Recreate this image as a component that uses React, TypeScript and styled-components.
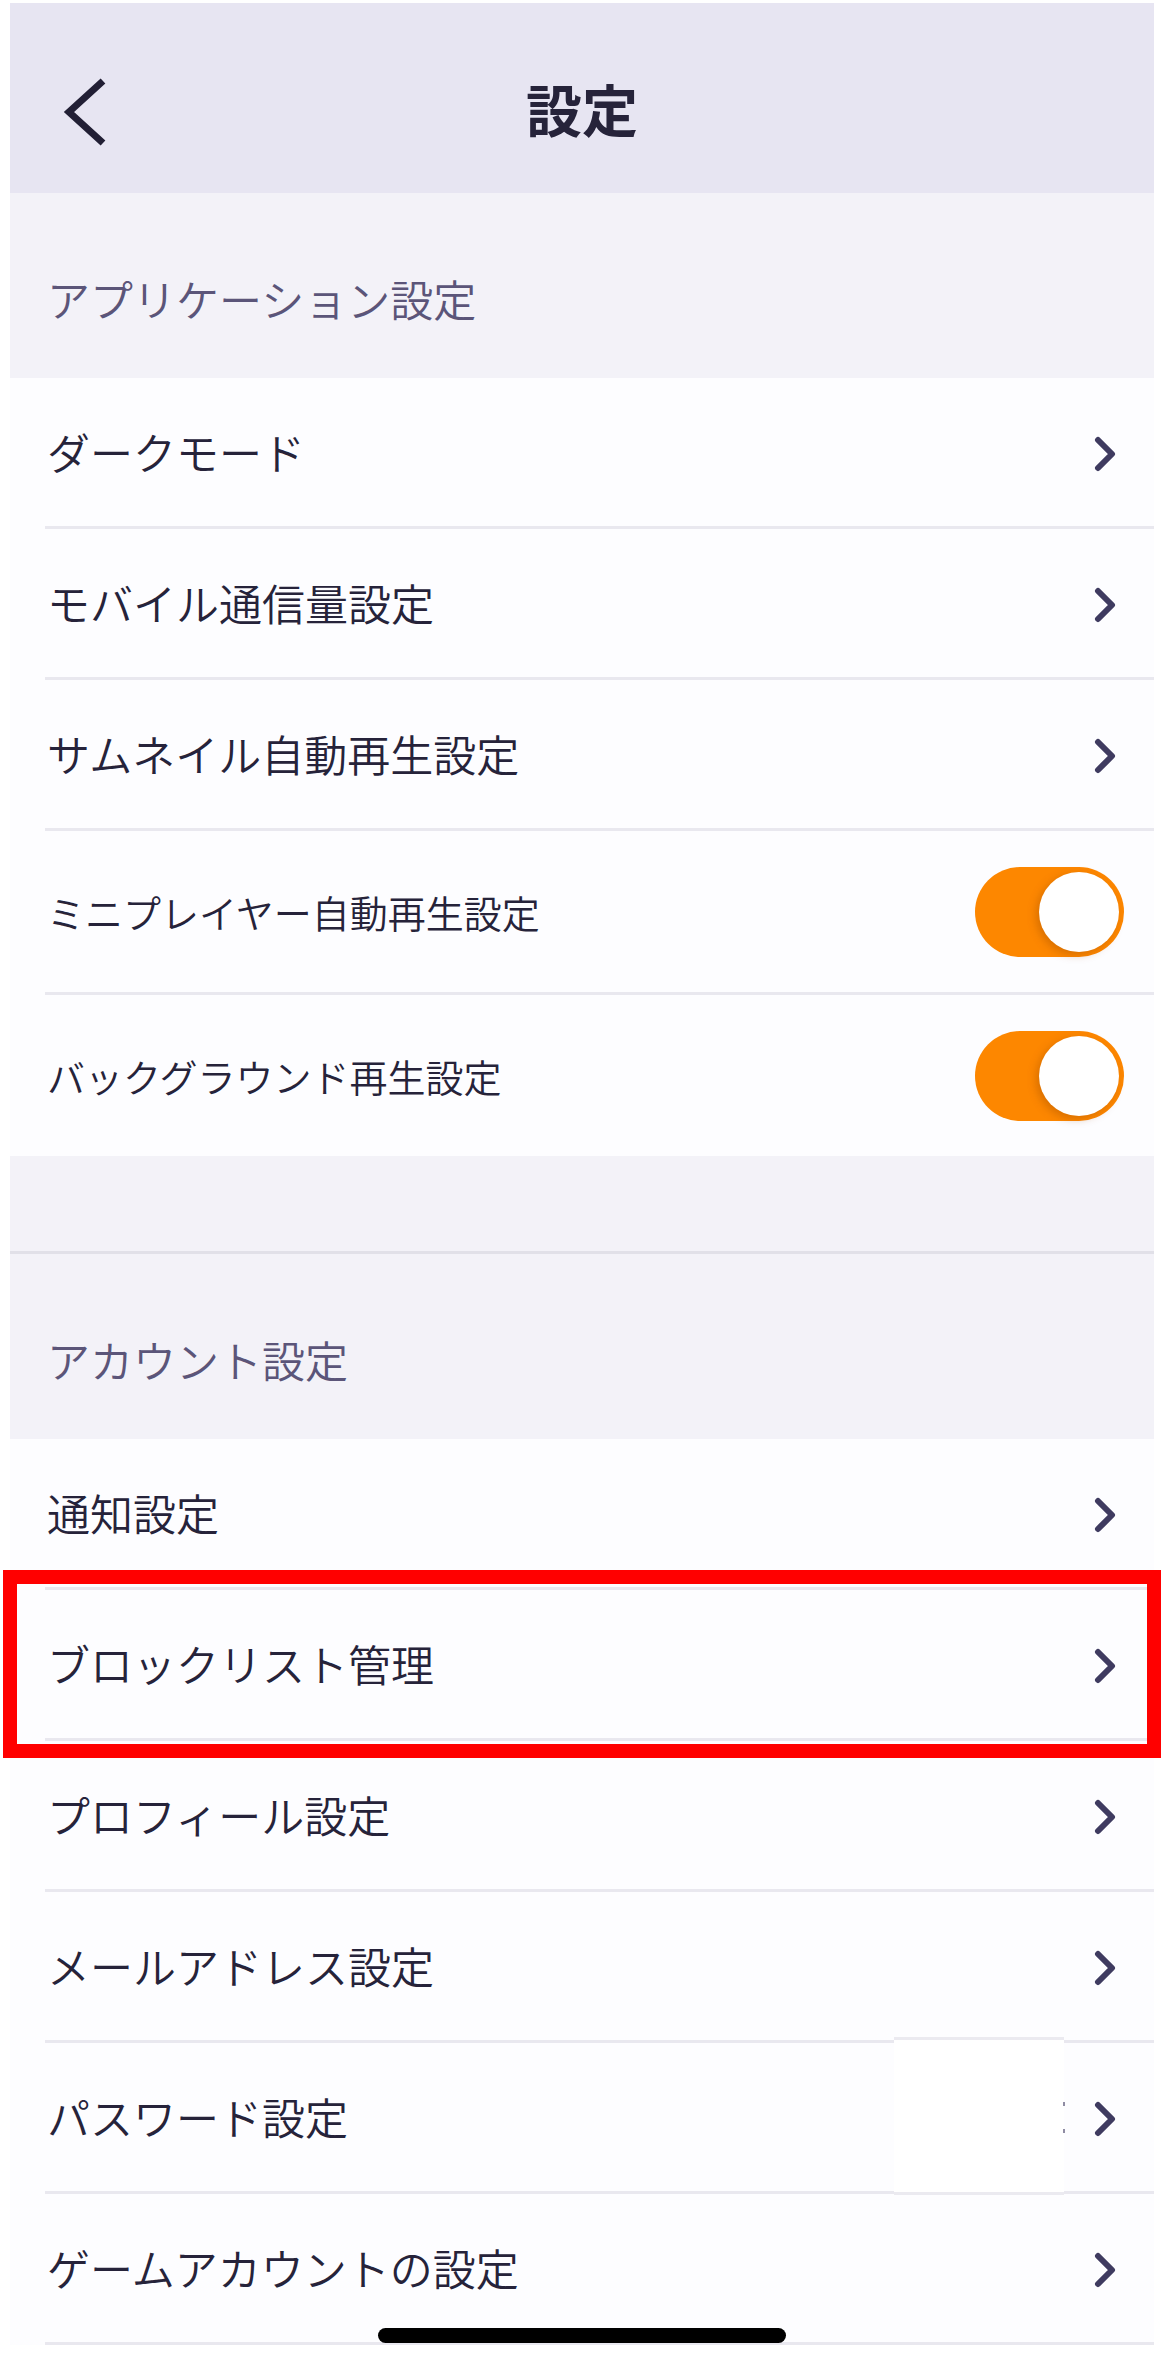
import React from 'react'
import styled, { createGlobalStyle } from 'styled-components'

const GlobalStyle = createGlobalStyle`
  html, body {
    margin: 0;
    padding: 0;
    background: #ffffff;
  }
  body {
    font-family: "Noto Sans CJK JP", "Noto Sans", sans-serif;
    color: #26233a;
  }
`

type Item = {
  label: string
  kind: 'link' | 'toggle'
  highlight?: boolean
  glitch?: boolean
}

const appSettings: Item[] = [
  { label: 'ダークモード', kind: 'link' },
  { label: 'モバイル通信量設定', kind: 'link' },
  { label: 'サムネイル自動再生設定', kind: 'link' },
  { label: 'ミニプレイヤー自動再生設定', kind: 'toggle' },
  { label: 'バックグラウンド再生設定', kind: 'toggle' },
]

const accountSettings: Item[] = [
  { label: '通知設定', kind: 'link' },
  { label: 'ブロックリスト管理', kind: 'link', highlight: true },
  { label: 'プロフィール設定', kind: 'link' },
  { label: 'メールアドレス設定', kind: 'link' },
  { label: 'パスワード設定', kind: 'link', glitch: true },
  { label: 'ゲームアカウントの設定', kind: 'link' },
]

const BackIcon = () => (
  <svg width="44" height="74" viewBox="0 0 44 74">
    <polyline
      points="40,6 6,37 40,68"
      fill="none"
      stroke="#221f35"
      strokeWidth="7"
    />
  </svg>
)

const Chevron = () => (
  <svg width="22" height="36" viewBox="0 0 22 36">
    <polyline
      points="4,4 18,18 4,32"
      fill="none"
      stroke="#3f3b60"
      strokeWidth="6"
      strokeLinecap="round"
      strokeLinejoin="round"
    />
  </svg>
)

const SettingRow = ({ item, last }: { item: Item; last?: boolean }) => (
  <Row $toggle={item.kind === 'toggle'} $divider={!last}>
    <RowLabel $small={item.kind === 'toggle'}>{item.label}</RowLabel>
    {item.kind === 'toggle' ? (
      <Toggle>
        <Knob />
      </Toggle>
    ) : (
      <ChevronWrap>
        <Chevron />
      </ChevronWrap>
    )}
    {item.highlight && <Highlight />}
    {item.glitch && (
      <Glitch>
        <GlitchDots />
      </Glitch>
    )}
  </Row>
)

export default function App() {
  return (
    <>
      <GlobalStyle />
      <Page>
        <Header>
          <HeaderInner>
            <BackButton>
              <BackIcon />
            </BackButton>
            <Title>設定</Title>
          </HeaderInner>
        </Header>

        <SectionHeader>アプリケーション設定</SectionHeader>
        <List>
          {appSettings.map((item, i) => (
            <SettingRow
              key={item.label}
              item={item}
              last={i === appSettings.length - 1}
            />
          ))}
        </List>

        <Spacer />

        <SectionHeader>アカウント設定</SectionHeader>
        <List>
          {accountSettings.map((item) => (
            <SettingRow key={item.label} item={item} />
          ))}
        </List>

        <HomeBar>
          <HomeIndicator />
        </HomeBar>
      </Page>
    </>
  )
}

const Page = styled.div`
  position: relative;
  width: 1144px;
  min-height: 2366px;
  margin: 0 auto;
  padding-top: 3px;
  display: flex;
  flex-direction: column;
`

const Header = styled.header`
  height: 190px;
  background-color: #e7e5f2;
  padding-top: 24px;
  box-sizing: border-box;
`

const HeaderInner = styled.div`
  position: relative;
  height: 162px;
  display: flex;
  align-items: center;
  justify-content: center;
`

const BackButton = styled.div`
  position: absolute;
  left: 53px;
  top: 48px;
  display: flex;
`

const Title = styled.h1`
  margin: 0;
  font-size: 56px;
  font-weight: 700;
  color: #26233a;
  line-height: 1;
  letter-spacing: 0;
`

const SectionHeader = styled.div`
  height: 185px;
  box-sizing: border-box;
  background-color: #f3f2f8;
  display: flex;
  align-items: flex-end;
  padding: 0 0 53px 37px;
  font-size: 43px;
  font-weight: 350;
  line-height: 1.2;
  color: #5b5579;
`

const List = styled.div`
  display: flex;
  flex-direction: column;
  background-color: #fdfdff;
`

const Row = styled.div<{ $toggle?: boolean; $divider?: boolean }>`
  position: relative;
  height: ${(p) => (p.$toggle ? 161 : 148)}px;
  display: flex;
  align-items: center;
  justify-content: space-between;
  padding: 0 30px 0 37px;
  margin-bottom: ${(p) => (p.$divider ? 3 : 0)}px;

  &::after {
    content: '';
    display: ${(p) => (p.$divider ? 'block' : 'none')};
    position: absolute;
    left: 35px;
    right: 0;
    bottom: -3px;
    height: 3px;
    background-color: #e9e8ef;
  }
`

const RowLabel = styled.span<{ $small?: boolean }>`
  font-size: ${(p) => (p.$small ? 38 : 43)}px;
  font-weight: 350;
  line-height: 1.2;
  color: #26233a;
`

const ChevronWrap = styled.div`
  display: flex;
  margin-right: 8px;
  margin-top: 4px;
`

const Toggle = styled.div`
  width: 149px;
  height: 90px;
  border-radius: 45px;
  background-color: #fd8700;
  display: flex;
  align-items: center;
  justify-content: flex-end;
  padding-right: 5px;
  box-sizing: border-box;
`

const Knob = styled.div`
  width: 80px;
  height: 80px;
  border-radius: 50%;
  background-color: #ffffff;
  box-shadow: -3px 3px 8px rgba(150, 70, 0, 0.35);
`

const Highlight = styled.div`
  position: absolute;
  top: -20px;
  bottom: -20px;
  left: -7px;
  right: -7px;
  border: 14px solid #ff0000;
  pointer-events: none;
  z-index: 2;
`

const Glitch = styled.div`
  position: absolute;
  left: 884px;
  width: 170px;
  top: -6px;
  bottom: -4px;
  background-color: #ffffff;
  border-top: 3px solid #ebeaf0;
  border-bottom: 3px solid #ebeaf0;
  z-index: 1;
`

const GlitchDots = styled.div`
  position: absolute;
  right: -1px;
  top: 62px;
  width: 2px;
  height: 31px;
  background: linear-gradient(
    #8f8ca3 0 4px,
    transparent 4px 27px,
    #8f8ca3 27px 31px
  );
`

const Spacer = styled.div`
  height: 95px;
  background-color: #f3f2f8;
  border-bottom: 3px solid #e1e0e8;
`

const HomeBar = styled.div`
  position: absolute;
  left: 0;
  right: 0;
  top: 2328px;
  display: flex;
  justify-content: center;
  pointer-events: none;
`

const HomeIndicator = styled.div`
  width: 408px;
  height: 15px;
  border-radius: 8px;
  background-color: #000000;
`
